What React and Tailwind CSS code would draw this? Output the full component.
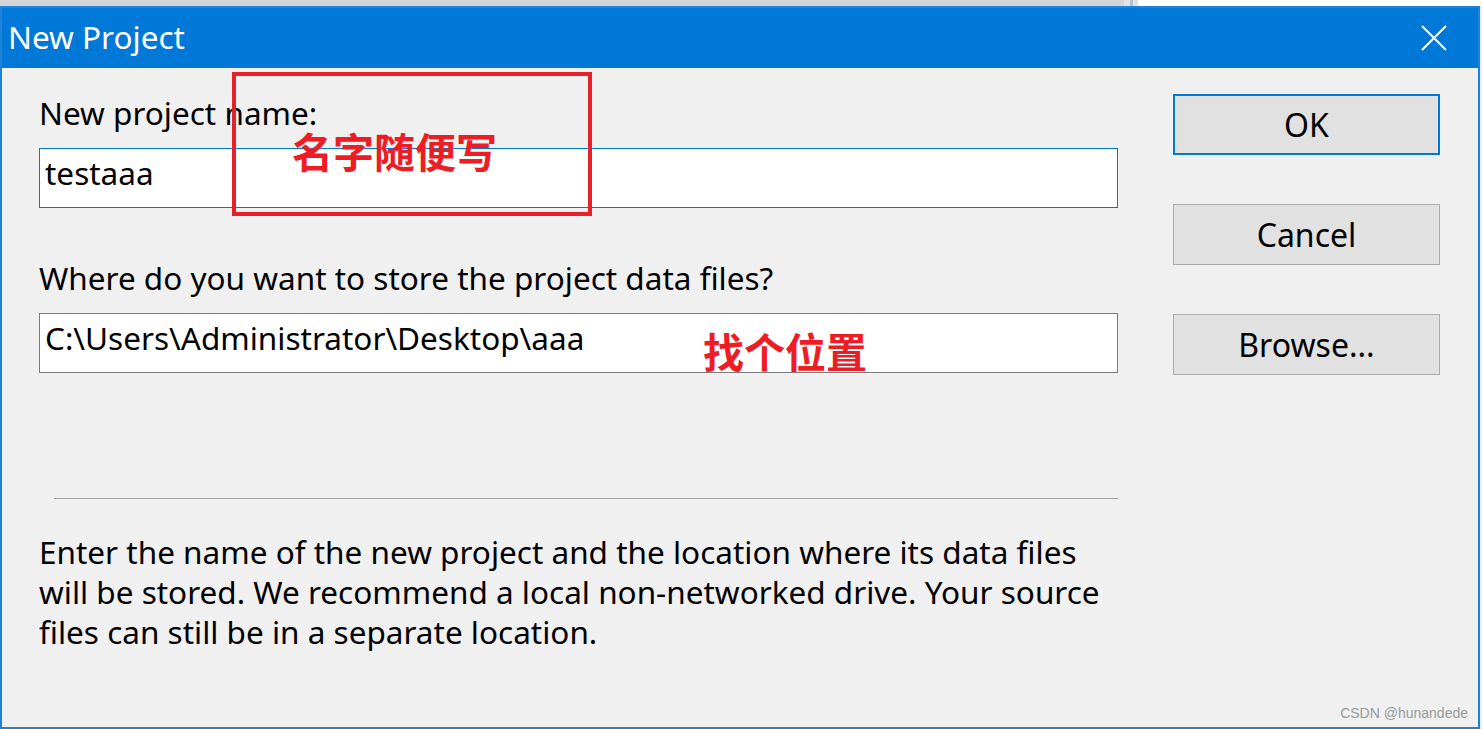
import React from 'react';

const font = { fontFamily: '"Noto Sans", "Open Sans", "Noto Sans CJK SC", sans-serif' };
const cjk = { fontFamily: '"Noto Sans CJK SC", sans-serif' };

const CloseIcon = () => (
  <svg width="28" height="28" viewBox="0 0 28 28" fill="none">
    <path d="M2 2 L26 26 M26 2 L2 26" stroke="white" strokeWidth="2" />
  </svg>
);

const DialogButton = ({ label, primary }) => (
  <button
    className={
      primary
        ? 'w-[267px] h-[61px] bg-[#e1e1e1] border-2 border-[#0078d7] text-[32px] leading-none text-black'
        : 'w-[267px] h-[61px] bg-[#e1e1e1] border border-[#adadad] text-[32px] leading-none text-black'
    }
  >
    {label}
  </button>
);

export default function App() {
  return (
    <div className="w-[1482px] h-[729px] overflow-hidden bg-[#f0f0f0]" style={font}>
      {/* desktop strip behind the dialog */}
      <div className="flex h-[6px]">
        <div className="w-[1124px] bg-[#d4d4d4]"></div>
        <div className="w-[6px] bg-[#dde3ea]"></div>
        <div className="w-[3px] bg-[#b9c2cc]"></div>
        <div className="w-[5px] bg-[#dde3ea]"></div>
        <div className="flex-1 bg-white"></div>
      </div>

      <div className="flex">
        <div className="relative w-[1480px] h-[723px] border-2 border-[#1e82d9] bg-[#f0f0f0] flex flex-col">
          {/* title bar */}
          <div className="h-[60px] bg-[#0078d7] flex items-center justify-between pl-[6px] pr-[30px]">
            <span className="text-white text-[31.5px] leading-none pb-[2px]">New Project</span>
            <CloseIcon />
          </div>

          <div className="flex flex-1">
            {/* left column */}
            <div className="w-[1116px] pl-[37px] flex flex-col">
              <div className="mt-[27px] text-[31.5px] leading-[36px] text-black">New project name:</div>
              <div className="mt-[17px] h-[60px] bg-white border border-[#0078d7] flex items-center pl-[5px] pb-[11px] text-[31.5px] text-black">
                testaaa
              </div>
              <div className="mt-[52px] text-[31.5px] leading-[36px] text-black">Where do you want to store the project data files?</div>
              <div className="mt-[17px] h-[60px] bg-white border border-[#7a7a7a] flex items-center pl-[5px] pb-[11px] text-[31.5px] text-black">
                C:\Users\Administrator\Desktop\aaa
              </div>
              <div className="mt-[125px] ml-[15px] h-px bg-[#a0a0a0]"></div>
              <div className="mt-[33px] text-[31.5px] leading-[40px] text-black whitespace-nowrap">
                Enter the name of the new project and the location where its data files
                <br />
                will be stored. We recommend a local non-networked drive. Your source
                <br />
                files can still be in a separate location.
              </div>
            </div>

            {/* right column */}
            <div className="ml-[55px] pt-[26px] flex flex-col gap-[49px]">
              <DialogButton label="OK" primary />
              <DialogButton label="Cancel" />
              <DialogButton label="Browse..." />
            </div>
          </div>

          {/* annotations */}
          <div className="absolute left-[230px] top-[64px] w-[360px] h-[144px] border-[4px] border-[#e8202a]"></div>
          <div className="absolute left-[290px] top-[122px] text-[41px] leading-none font-bold text-[#ee1c25]" style={cjk}>
            名字随便写
          </div>
          <div className="absolute left-[701px] top-[322px] text-[41px] leading-none font-bold text-[#ee1c25]" style={cjk}>
            找个位置
          </div>
          <div className="absolute right-[10px] bottom-[3px] text-[14px] text-[#999999]" style={{ fontFamily: '"Liberation Sans", sans-serif' }}>
            CSDN @hunandede
          </div>
        </div>
        <div className="flex-1 bg-[#e8eef4]"></div>
      </div>
    </div>
  );
}
